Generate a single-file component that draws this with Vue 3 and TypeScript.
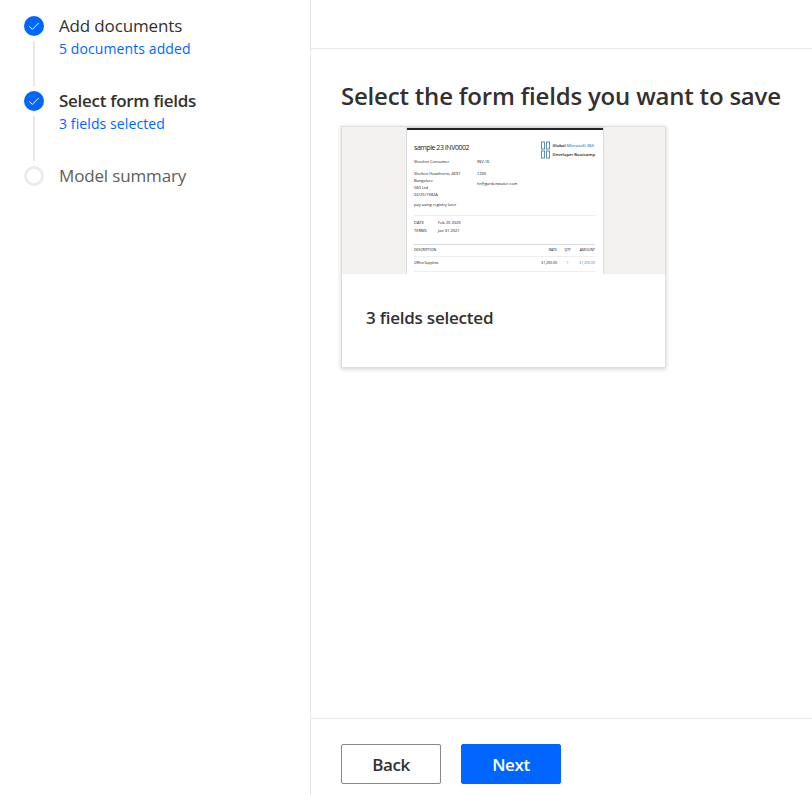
<template>
  <div class="wizard">
    <!-- Left Column: steps -->
    <aside class="steps">
      <div v-for="(step, i) in steps" :key="step.title" class="step">
        <div class="marker">
          <span :class="['dot', { done: step.done }]">
            <svg v-if="step.done" width="12" height="12" viewBox="0 0 12 12">
              <path d="M1.2 6.4 L4.4 9.4 L10.8 2.9" fill="none" stroke="#fff" stroke-width="1" />
            </svg>
          </span>
          <span v-if="i < steps.length - 1" class="line"></span>
        </div>
        <div class="labels">
          <div :class="['title', { active: step.active, pending: !step.done }]">{{ step.title }}</div>
          <div v-if="step.note" class="note">{{ step.note }}</div>
        </div>
      </div>
    </aside>

    <!-- Right Column: form -->
    <main class="content">
      <div class="topbar"></div>
      <div class="body">
        <h1>Select the form fields you want to save</h1>
        <div class="card">
          <div class="preview">
            <div class="doc">
              <div class="doc-head">
                <div class="doc-title">sample 23 INV0002</div>
                <div class="brand">
                  <svg width="9" height="18" viewBox="0 0 9 18">
                    <g fill="none" stroke="#5f8fb0" stroke-width="1">
                      <rect x="0.5" y="1" width="3" height="7" />
                      <rect x="5.5" y="1" width="3" height="7" />
                      <rect x="0.5" y="10" width="3" height="7" />
                      <rect x="5.5" y="10" width="3" height="7" />
                    </g>
                  </svg>
                  <div class="brand-text">
                    <div>Global <span class="blue">Microsoft 365</span></div>
                    <div>Developer Bootcamp</div>
                  </div>
                </div>
              </div>
              <div class="doc-info">
                <div class="doc-left">
                  <p class="gap">Shoshin Consumer</p>
                  <p>Shelton Hawthorne 4697</p>
                  <p>Bangalore</p>
                  <p>560 Ltd</p>
                  <p>02/25/1982A</p>
                </div>
                <div class="doc-right">
                  <p class="gap">INV-16</p>
                  <p>1200</p>
                  <p class="mail">hr@gardenwater.com</p>
                </div>
              </div>
              <p class="pay">pay using registry later</p>
              <div class="dates">
                <p><span>DATE</span>Feb 20 2020</p>
                <p><span>TERMS</span>Jan 01 2021</p>
              </div>
              <div class="row head">
                <span class="desc">DESCRIPTION</span><span>RATE</span><span class="qty">QTY</span><span class="amount">AMOUNT</span>
              </div>
              <div class="row">
                <span class="desc">Office Supplies</span><span>$1,200.00</span><span class="qty blue">1</span><span class="amount blue">$1,200.00</span>
              </div>
            </div>
          </div>
          <div class="caption">3 fields selected</div>
        </div>
      </div>
      <div class="footer">
        <button class="btn">Back</button>
        <button class="btn primary">Next</button>
      </div>
    </main>
  </div>
</template>

<script setup lang="ts">
interface Step {
  title: string;
  note?: string;
  done: boolean;
  active?: boolean;
}

const steps: Step[] = [
  { title: 'Add documents', note: '5 documents added', done: true },
  { title: 'Select form fields', note: '3 fields selected', done: true, active: true },
  { title: 'Model summary', done: false },
];
</script>

<style>
html,
body {
  margin: 0;
  background: #fff;
}
</style>

<style scoped>
.wizard {
  display: flex;
  width: 812px;
  height: 795px;
  overflow: hidden;
  font-family: 'Open Sans', 'Noto Sans', sans-serif;
  color: #323130;
}

.steps {
  width: 311px;
  flex-shrink: 0;
  box-sizing: border-box;
  padding: 16px 0 0 24px;
  border-right: 1px solid #e8e8e8;
}

.step {
  display: flex;
  height: 75px;
}

.marker {
  width: 20px;
  display: flex;
  flex-direction: column;
  align-items: center;
  margin-right: 15px;
}

.dot {
  width: 20px;
  height: 20px;
  flex-shrink: 0;
  box-sizing: border-box;
  border-radius: 50%;
  display: flex;
  align-items: center;
  justify-content: center;
  border: 3px solid #edebe9;
}

.dot.done {
  background: #0066ff;
  border: none;
}

.line {
  width: 2px;
  height: 45px;
  margin-top: 5px;
  background: #e8e8e8;
}

.labels {
  margin-top: -1px;
}

.title {
  font-size: 17px;
  line-height: 22px;
  letter-spacing: -0.15px;
}

.title.active {
  font-weight: 600;
  letter-spacing: -0.28px;
}

.title.pending {
  color: #605e5c;
}

.note {
  margin-top: 2px;
  font-size: 14px;
  line-height: 20px;
  color: #0066ff;
  letter-spacing: 0.1px;
}

.content {
  flex: 1;
  display: flex;
  flex-direction: column;
  min-width: 0;
}

.topbar {
  height: 48px;
  flex-shrink: 0;
  border-bottom: 1px solid #e8e8e8;
}

.body {
  flex: 1;
  padding: 29px 0 0 30px;
}

h1 {
  margin: 0 0 13px;
  font-size: 24px;
  line-height: 35px;
  font-weight: 600;
  white-space: nowrap;
  letter-spacing: -0.2px;
}

.card {
  width: 325px;
  height: 242px;
  box-sizing: border-box;
  background: #fff;
  border: 1px solid #e1dfdd;
  box-shadow: 0 1px 4px rgba(0, 0, 0, 0.2);
}

.preview {
  height: 147px;
  background: #f3f2f1;
  display: flex;
  justify-content: center;
  overflow: hidden;
}

.doc {
  width: 196px;
  margin: 1px 0 0 3px;
  padding: 0 8px 0 7px;
  box-sizing: border-box;
  background: #fff;
  border-top: 2px solid #252423;
  outline: 1px solid #dcdcdc;
  font-size: 4px;
  line-height: 6px;
  color: #111;
  white-space: nowrap;
}

.doc p {
  margin: 0;
}

.doc-head {
  display: flex;
  justify-content: space-between;
  height: 17px;
  padding-top: 11px;
}

.doc-title {
  font-size: 7px;
  line-height: 10px;
  margin-top: 2px;
  letter-spacing: -0.45px;
  color: #222;
}

.brand {
  display: flex;
  gap: 3px;
  height: 18px;
  font-size: 4.2px;
  line-height: 9px;
  font-weight: 600;
  color: #111;
}

.blue {
  color: #2b88d8;
}

.doc-info {
  display: flex;
}

.doc-left {
  width: 63px;
}

.doc-left p,
.doc-right p {
  line-height: 7px;
}

.doc-left .gap,
.doc-right .gap {
  margin-bottom: 5px;
}

.doc-right .mail {
  margin-top: 3px;
}

.doc .pay {
  margin-top: 4px;
  padding-bottom: 7px;
  border-bottom: 1px solid #eee;
}

.dates {
  margin-top: 3px;
  padding-bottom: 9px;
}

.dates p {
  line-height: 8px;
}

.dates span {
  display: inline-block;
  width: 24px;
}

.row {
  display: flex;
  justify-content: flex-end;
  padding: 3px 0 5px;
  border-bottom: 1px solid #eee;
  font-size: 3.5px;
}

.row.head {
  border-top: 1px solid #d8d8d8;
  padding: 2px 0 3px;
}

.desc {
  margin-right: auto;
}

.qty {
  width: 11px;
  margin-left: 5px;
  text-align: center;
}

.amount {
  width: 22px;
  text-align: right;
}

.caption {
  padding: 33px 24px 0;
  font-size: 17px;
  line-height: 22px;
  font-weight: 600;
  letter-spacing: -0.22px;
}

.footer {
  height: 77px;
  flex-shrink: 0;
  box-sizing: border-box;
  border-top: 1px solid #e8e8e8;
  padding: 25px 0 0 30px;
  display: flex;
  gap: 20px;
}

.btn {
  width: 100px;
  height: 40px;
  box-sizing: border-box;
  border: 1px solid #8a8886;
  border-radius: 2px;
  background: #fff;
  color: #323130;
  font-family: inherit;
  font-size: 17px;
  font-weight: 600;
  letter-spacing: -0.4px;
}

.btn.primary {
  background: #0066ff;
  border-color: #0066ff;
  color: #fff;
}
</style>
